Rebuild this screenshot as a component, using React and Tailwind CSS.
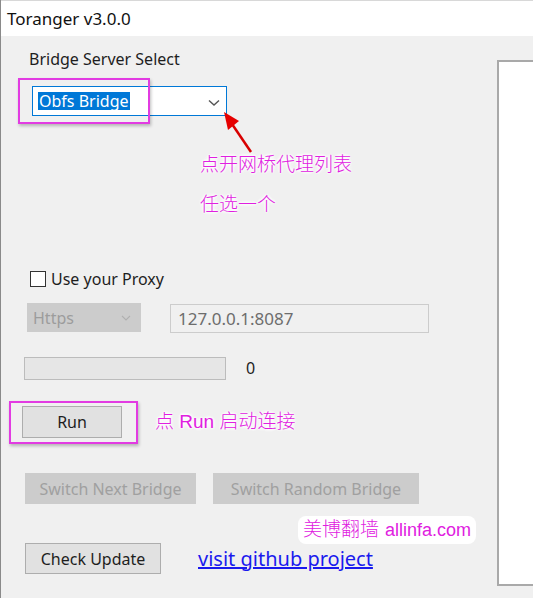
import React from "react";

const cjk = "font-['Liberation_Sans','Noto_Sans_CJK_SC',sans-serif]";
const glow = "[text-shadow:0_0_3px_#fff,0_0_3px_#fff,0_0_3px_#fff,0_0_4px_#fff,0_0_4px_#fff]";

const App = () => {
  return (
    <div className="relative w-[533px] h-[598px] overflow-hidden flex flex-col bg-[#f0f0f0] border-l border-[#8a8a8a] font-['Noto_Sans',sans-serif] text-[#1e1e1e]">
      {/* title bar */}
      <div className="h-[36px] bg-white flex items-center pl-[6px] text-[17px] text-[#111] border-t border-[#d8d8d8]">
        Toranger v3.0.0
      </div>

      <div className="flex-1 flex">
        {/* left form */}
        <div className="w-[496px] flex flex-col pt-[13px]">
          <div className="ml-[28px] h-[20px] leading-[20px] text-[16px]">Bridge Server Select</div>

          <div className="relative mt-[17px] ml-[31px] w-[195px] h-[30px] border border-[#0078d7] bg-white flex items-center justify-between pl-[5px] pr-[6px]">
            <span className="bg-[#0078d7] text-white text-[16px] h-[18px] leading-[18px] px-[1px]">Obfs Bridge</span>
            <svg width="12" height="8" viewBox="0 0 12 8" className="mt-[3px]">
              <path d="M1 1.5 L6 6 L11 1.5" fill="none" stroke="#555" strokeWidth="1.4" />
            </svg>
            <div className="absolute left-[-15px] top-[-9px] w-[132px] h-[46px] border-2 border-[#e23be2] shadow-[1px_2px_3px_rgba(0,0,0,0.25)]" />
          </div>

          <div className={`mt-[36px] ml-[199px] text-[19px] leading-[26px] text-[#e020e0] font-light ${cjk} ${glow}`}>
            点开网桥代理列表
          </div>
          <div className={`mt-[14px] ml-[199px] text-[19px] leading-[26px] text-[#e020e0] font-light ${cjk} ${glow}`}>
            任选一个
          </div>

          {/* proxy */}
          <div className="mt-[51px] ml-[29px] h-[20px] flex items-center gap-[5px] text-[16px]">
            <div className="w-[16px] h-[16px] border border-[#333] bg-white" />
            <span>Use your Proxy</span>
          </div>

          <div className="mt-[14px] flex items-start">
            <div className="ml-[26px] w-[114px] h-[29px] bg-[#cccccc] flex items-center justify-between pl-[6px] pr-[10px] text-[16px] text-[#9c9c9c]">
              <span>Https</span>
              <svg width="10" height="6" viewBox="0 0 10 6">
                <path d="M1 1 L5 5 L9 1" fill="none" stroke="#b0b0b0" strokeWidth="1.1" />
              </svg>
            </div>
            <div className="ml-[29px] mt-[1px] w-[259px] h-[29px] border border-[#cccccc] bg-[#f0f0f0] flex items-center px-[7px] text-[17px] text-[#6d6d6d]">
              127.0.0.1:8087
            </div>
          </div>

          <div className="mt-[23px] flex items-center">
            <div className="ml-[23px] w-[202px] h-[23px] bg-[#e6e6e6] border border-[#bcbcbc]" />
            <span className="ml-[20px] text-[16px]">0</span>
          </div>

          {/* run */}
          <div className="mt-[26px] flex items-center">
            <div className="relative ml-[21px]">
              <button className="w-[100px] h-[32px] border border-[#adadad] bg-[#e1e1e1] text-[16px]">Run</button>
              <div className="absolute left-[-13px] top-[-5px] w-[129px] h-[43px] border-2 border-[#e23be2] shadow-[1px_2px_3px_rgba(0,0,0,0.25)]" />
            </div>
            <span className={`ml-[33px] text-[19px] text-[#e020e0] font-light ${cjk} ${glow}`}>
              点 Run 启动连接
            </span>
          </div>

          <div className="mt-[35px] flex">
            <button className="ml-[24px] w-[171px] h-[31px] bg-[#cccccc] text-[16px] text-[#a0a0a0]">Switch Next Bridge</button>
            <button className="ml-[17px] w-[206px] h-[31px] bg-[#cccccc] text-[16px] text-[#a0a0a0]">Switch Random Bridge</button>
          </div>

          <div className={`mt-[12px] ml-[297px] w-[178px] h-[28px] bg-white rounded-[8px] flex items-center justify-center text-[19px] text-[#e020e0] ${cjk}`}>
            <span className="font-light">美博翻墙</span>
            <span className="ml-[6px] text-[18px]">allinfa.com</span>
          </div>

          <div className="mt-[-1px] flex items-center">
            <button className="ml-[24px] w-[136px] h-[31px] border border-[#adadad] bg-[#e1e1e1] text-[16px]">Check Update</button>
            <a className="ml-[37px] text-[20px] text-[#1a1aee] underline">visit github project</a>
          </div>
        </div>

        {/* right log panel */}
        <div className="flex-1 mt-[24px] mb-[12px] bg-white border-2 border-r-0 border-[#a9a9a9]" />
      </div>

      {/* annotation arrow */}
      <svg className="absolute left-0 top-0 pointer-events-none" width="533" height="598">
        <line x1="231" y1="124" x2="250" y2="152" stroke="#d80000" strokeWidth="2.5" />
        <polygon points="223,112 238,121 227,130" fill="#e60000" />
      </svg>
    </div>
  );
};

export default App;
